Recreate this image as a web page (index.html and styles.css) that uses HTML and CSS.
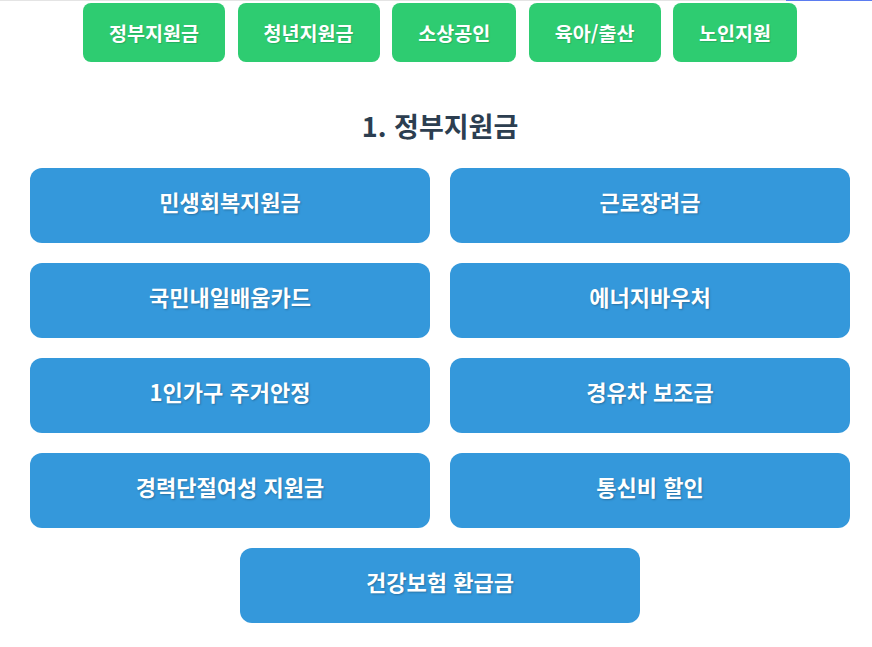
FILE: index.html
```html
<!DOCTYPE html>
<html lang="ko">
<head>
<meta charset="utf-8">
<link rel="stylesheet" href="styles.css">
</head>
<body>
<div class="topline"><div class="progress"></div></div>
<div class="page">
  <nav class="tabs">
    <a class="tab">정부지원금</a>
    <a class="tab">청년지원금</a>
    <a class="tab">소상공인</a>
    <a class="tab">육아/출산</a>
    <a class="tab">노인지원</a>
  </nav>
  <h2 class="title">1. 정부지원금</h2>
  <div class="grid">
    <a class="item">민생회복지원금</a>
    <a class="item">근로장려금</a>
    <a class="item">국민내일배움카드</a>
    <a class="item">에너지바우처</a>
    <a class="item">1인가구 주거안정</a>
    <a class="item">경유차 보조금</a>
    <a class="item">경력단절여성 지원금</a>
    <a class="item">통신비 할인</a>
    <a class="item wide">건강보험 환급금</a>
  </div>
</div>
</body>
</html>
```

FILE: styles.css
```css
* { box-sizing: border-box; }
html, body { margin: 0; padding: 0; background: #fff; }
body {
  font-family: "Noto Sans CJK KR", "Noto Sans", sans-serif;
  width: 880px;
  overflow: hidden;
}
.topline {
  height: 3px;
  border-top: 1px solid #e4e4e4;
  position: relative;
}
.progress {
  position: absolute;
  top: -1px;
  left: 786px;
  right: 0;
  height: 1px;
  background: #5b7cf0;
}
.page {
  width: 820px;
  margin-left: 30px;
}
.tabs {
  display: flex;
  justify-content: center;
  gap: 12.5px;
}
.tab {
  display: flex;
  align-items: center;
  justify-content: center;
  background: #2ecc71;
  color: #fff;
  font-weight: 700;
  font-size: 19.6px;
  height: 59px;
  padding: 0 26px;
  border-radius: 8px;
  text-shadow: 1px 1px 1px rgba(0,0,0,0.15);
}
.title {
  margin: 0;
  padding-top: 45px;
  height: 106px;
  text-align: center;
  font-size: 27px;
  line-height: 38px;
  font-weight: 700;
  color: #2c3e50;
}
.grid {
  display: grid;
  grid-template-columns: 400px 400px;
  gap: 20px;
}
.item {
  display: flex;
  align-items: center;
  justify-content: center;
  height: 75px;
  padding-bottom: 10px;
  background: #3498db;
  color: #fff;
  font-size: 22px;
  font-weight: 700;
  border-radius: 12px;
  text-shadow: 1px 1px 2px rgba(0,0,0,0.25);
}
.item.wide {
  grid-column: 1 / span 2;
  justify-self: center;
  width: 400px;
}
```
